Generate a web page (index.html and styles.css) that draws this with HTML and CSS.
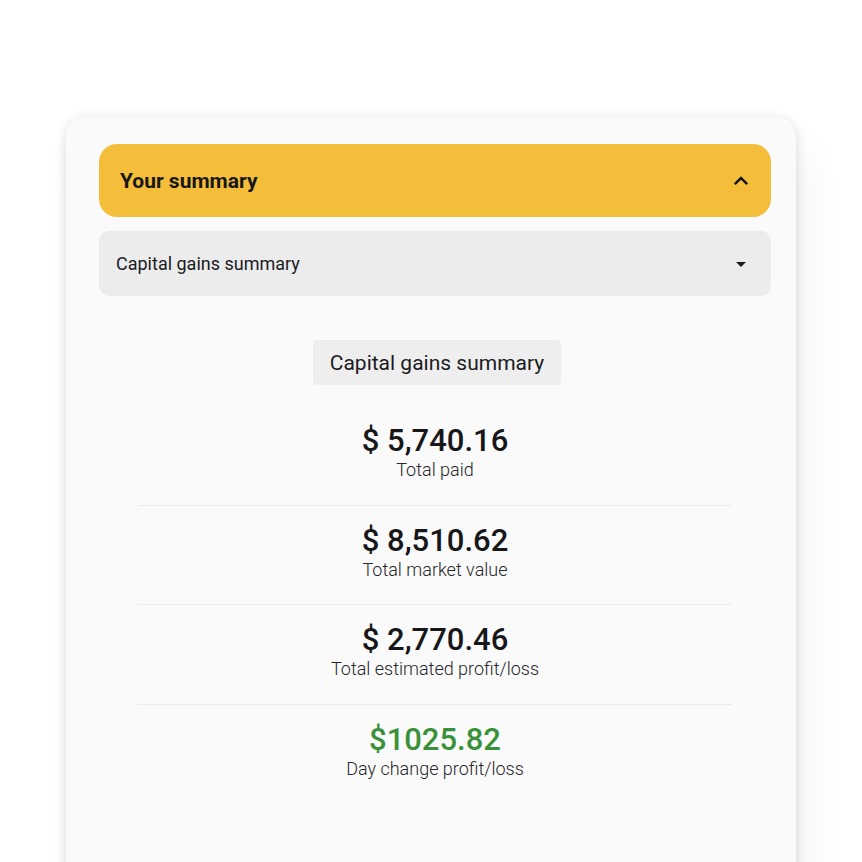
FILE: index.html
```html
<!DOCTYPE html>
<html lang="en">
<head>
<meta charset="utf-8">
<title>Your summary</title>
<link rel="stylesheet" href="styles.css">
</head>
<body>
<div class="page">
  <section class="card">
    <header class="panel-head">
      <h2 class="panel-title">Your summary</h2>
      <svg class="chev" viewBox="0 0 24 24" width="28" height="28" aria-hidden="true"><path d="M12 8l-6 6 1.41 1.41L12 10.83l4.59 4.58L18 14z"/></svg>
    </header>
    <div class="select">
      <span class="select-label">Capital gains summary</span>
      <svg class="caret" viewBox="0 0 24 24" width="24" height="24" aria-hidden="true"><path d="M7 10l5 5 5-5z"/></svg>
    </div>
    <div class="content">
      <div class="chip">Capital gains summary</div>
      <div class="stats">
        <div class="stat">
          <div class="amount">$ 5,740.16</div>
          <div class="label">Total paid</div>
        </div>
        <div class="stat">
          <div class="amount">$ 8,510.62</div>
          <div class="label">Total market value</div>
        </div>
        <div class="stat">
          <div class="amount">$ 2,770.46</div>
          <div class="label">Total estimated profit/loss</div>
        </div>
        <div class="stat last">
          <div class="amount green">$1025.82</div>
          <div class="label">Day change profit/loss</div>
        </div>
      </div>
    </div>
  </section>
</div>
</body>
</html>
```
FILE: styles.css
```css
html, body {
  margin: 0;
  padding: 0;
  background: #ffffff;
  height: 862px;
  overflow: hidden;
}
body {
  font-family: Roboto, "Liberation Sans", Arial, sans-serif;
  color: #1b1b1f;
}
.page {
  padding: 117px 0 0 66px;
}
.card {
  position: relative;
  width: 730px;
  height: 800px;
  box-sizing: border-box;
  background: #fafafa;
  border-radius: 20px;
  padding: 27px 25px 0 33px;
  box-shadow: 0 2px 12px rgba(0, 0, 0, 0.14), 10px 30px 40px rgba(0, 0, 0, 0.05);
}
.panel-head {
  height: 73px;
  box-sizing: border-box;
  background: #f4be3b;
  border-radius: 18px;
  display: flex;
  align-items: center;
  justify-content: space-between;
  padding: 0 16px 0 21px;
}
.panel-title {
  margin: 0;
  font-size: 21px;
  font-weight: 700;
  color: #17171a;
}
.chev {
  fill: #111;
  display: block;
}
.select {
  margin-top: 14px;
  height: 65px;
  box-sizing: border-box;
  background: #ececec;
  border-radius: 10px;
  display: flex;
  align-items: center;
  justify-content: space-between;
  padding: 0 18px 0 17px;
}
.select-label {
  font-size: 18px;
  color: #1b1b1f;
}
.caret {
  fill: #1b1b1f;
  display: block;
}
.content {
  display: flex;
  flex-direction: column;
  align-items: center;
  padding-top: 44px;
}
.chip {
  height: 45px;
  box-sizing: border-box;
  padding: 0 17px;
  margin-left: 4px;
  display: flex;
  align-items: center;
  background: #eeeeee;
  border-radius: 4px;
  font-size: 21px;
  color: #1b1b1f;
}
.stats {
  width: 594px;
  margin-top: 21px;
}
.stat {
  padding: 17px 0 23.5px;
  border-bottom: 1px solid #ececec;
  text-align: center;
}
.stat.last {
  border-bottom: none;
}
.amount {
  font-size: 31px;
  line-height: 36px;
  font-weight: 500;
  color: #17171a;
}
.amount.green {
  color: #3b9139;
}
.label {
  font-size: 18px;
  line-height: 22px;
  font-weight: 300;
  color: #26262a;
}
```
